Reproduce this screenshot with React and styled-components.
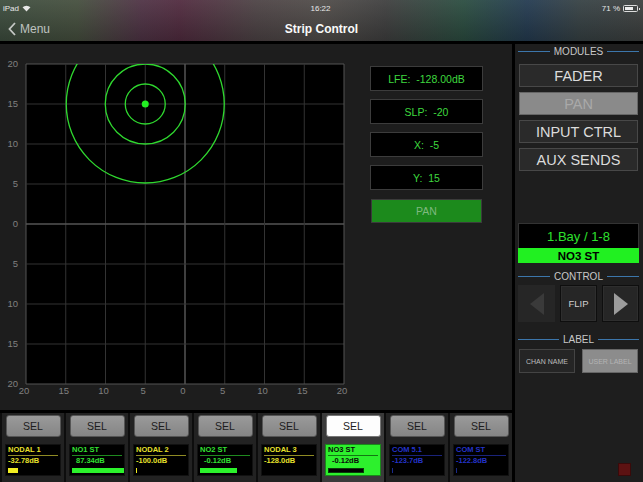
import React from 'react'
import styled, { createGlobalStyle } from 'styled-components'

const Global = createGlobalStyle`
  html, body { margin: 0; padding: 0; background: #000; }
  * { box-sizing: border-box; }
`

const Screen = styled.div`
  width: 643px;
  height: 482px;
  overflow: hidden;
  display: flex;
  flex-direction: column;
  background: #000;
  font-family: "Liberation Sans", Arial, sans-serif;
`

const TopBar = styled.div`
  height: 41px;
  flex: none;
  position: relative;
  background:
    linear-gradient(to bottom, rgba(255,255,255,0.05) 0%, rgba(0,0,0,0.22) 100%),
    linear-gradient(to right, #3e4e3f 0%, #46503f 12%, #503446 22%, #522c40 28%, #4e4446 40%, #514d4a 50%, #404040 60%, #2c4e41 72%, #253c52 82%, #374245 90%, #3e4140 100%);
  color: #fff;
`

const StatusRow = styled.div`
  height: 17px;
  display: flex;
  align-items: center;
  justify-content: space-between;
  padding: 0 5px 0 3px;
  font-size: 8px;
  color: #e8e8e8;
`

const StatusSide = styled.div`
  width: 80px;
  display: flex;
  align-items: center;
  gap: 3px;
  justify-content: ${p => (p.$right ? 'flex-end' : 'flex-start')};
`

const Battery = styled.div`
  width: 15px;
  height: 7px;
  border: 1px solid #ddd;
  border-radius: 1.5px;
  padding: 1px;
  position: relative;
  &::before {
    content: '';
    display: block;
    width: 70%;
    height: 100%;
    background: #eee;
  }
  &::after {
    content: '';
    position: absolute;
    right: -3px;
    top: 1.5px;
    width: 1.5px;
    height: 2.5px;
    background: #ddd;
  }
`

const NavRow = styled.div`
  height: 24px;
  display: flex;
  align-items: center;
  position: relative;
`

const BackLink = styled.div`
  display: flex;
  align-items: center;
  gap: 4px;
  padding-left: 8px;
  font-size: 12px;
  color: #bfc3c0;
`

const Title = styled.div`
  position: absolute;
  left: 0;
  right: 0;
  text-align: center;
  font-size: 12px;
  font-weight: bold;
  color: #fafafa;
  pointer-events: none;
`

const Body = styled.div`
  flex: 1;
  display: flex;
  margin-top: 3px;
  gap: 3px;
  min-height: 0;
`

const LeftCol = styled.div`
  width: 512px;
  flex: none;
  display: flex;
  flex-direction: column;
  gap: 3px;
`

const PanPanel = styled.div`
  height: 366px;
  background: #1d1d1d;
  display: flex;
  padding-top: 10px;
`

const ChartBox = styled.div`
  width: 370px;
  flex: none;
`

const InfoCol = styled.div`
  width: 113px;
  display: flex;
  flex-direction: column;
  gap: 8px;
  padding-top: 12px;
`

const Readout = styled.div`
  height: 25px;
  background: #000;
  border: 1px solid #3c3c3c;
  color: #3ed83e;
  font-size: 10.5px;
  display: flex;
  align-items: center;
  justify-content: center;
  white-space: pre;
`

const PanButton = styled.div`
  height: 24px;
  margin: 1px 1px 0;
  background: #1c8a1c;
  border: 1px solid #3b3b3b;
  color: #7fb97f;
  font-size: 10.5px;
  display: flex;
  align-items: center;
  justify-content: center;
`

const StripRow = styled.div`
  flex: 1;
  background: #0d0d0d;
  display: flex;
  gap: 2px;
  padding-left: 2px;
`

const Strip = styled.div`
  width: 62px;
  background: ${p => (p.$selected ? '#3a3a3a' : '#222')};
  display: flex;
  flex-direction: column;
  align-items: center;
  padding-top: 2px;
`

const SelButton = styled.div`
  width: 55px;
  height: 22px;
  border-radius: 3px;
  background: ${p => (p.$selected ? '#fdfdfd' : 'linear-gradient(#9a9a9a, #858585)')};
  border: 1px solid ${p => (p.$selected ? '#777' : '#555')};
  color: #1c1c1c;
  font-size: 10.5px;
  display: flex;
  align-items: center;
  justify-content: center;
`

const LabelBox = styled.div`
  width: 56px;
  height: 32px;
  margin-top: 7px;
  background: ${p => (p.$selected ? '#2df02d' : '#000')};
  border: 1px solid ${p => (p.$selected ? '#1a8a1a' : '#111')};
  padding: 1px 2px 0;
  display: flex;
  flex-direction: column;
  color: ${p => p.$color};
  font-size: 7.5px;
  font-weight: bold;
  line-height: 8px;
`

const ChanName = styled.div`
  border-bottom: 1px solid ${p => p.$line};
  padding-bottom: 1px;
  white-space: nowrap;
`

const ChanDb = styled.div`
  padding-left: ${p => (p.$indent ? '4px' : '0')};
  margin-top: 1px;
  white-space: nowrap;
`

const Meter = styled.div`
  margin-top: auto;
  margin-bottom: 2px;
  height: 5px;
  width: ${p => p.$w}px;
  background: ${p => p.$fill};
  border: ${p => (p.$outline ? '1px solid #0a3a0a' : 'none')};
`

const RightPanel = styled.div`
  flex: 1;
  background: #1e1e1e;
  padding: 0 4px 0 3px;
  display: flex;
  flex-direction: column;
  position: relative;
`

const SectionHead = styled.div`
  display: flex;
  align-items: center;
  gap: 4px;
  height: 15px;
  margin-top: ${p => p.$top || 0}px;
  color: #c8c8c8;
  font-size: 10px;
  &::before, &::after {
    content: '';
    flex: 1;
    height: 1.5px;
    background: #3c76ab;
  }
`

const ModuleButton = styled.div`
  height: 23px;
  margin: 5px 1px 0;
  background: ${p => (p.$active ? '#8a8a8a' : '#2a2a2a')};
  border: 1px solid ${p => (p.$active ? '#666' : '#484848')};
  color: ${p => (p.$active ? '#a9a9a9' : '#dcdcdc')};
  font-size: 14.5px;
  display: flex;
  align-items: center;
  justify-content: center;
`

const BayBox = styled.div`
  margin-top: 52px;
  height: 25px;
  background: #000;
  border: 1px solid #333;
  border-bottom: none;
  color: #2ee02e;
  font-size: 13px;
  display: flex;
  align-items: center;
  justify-content: center;
`

const BayName = styled.div`
  height: 15px;
  background: #21f021;
  color: #000;
  font-size: 11.5px;
  font-weight: bold;
  display: flex;
  align-items: center;
  justify-content: center;
`

const ControlRow = styled.div`
  margin-top: 1px;
  display: flex;
  justify-content: space-between;
`

const CtrlButton = styled.div`
  width: 37px;
  height: 37px;
  background: #262626;
  border: 1px solid ${p => (p.$dim ? '#262626' : '#0e0e0e')};
  box-shadow: ${p => (p.$dim ? 'none' : 'inset 0 0 0 1px #2e2e2e')};
  color: #cfcfcf;
  font-size: 9.5px;
  display: flex;
  align-items: center;
  justify-content: center;
`

const LabelRow = styled.div`
  margin-top: 2px;
  display: flex;
  justify-content: space-between;
  padding: 0 1px;
`

const LabelButton = styled.div`
  width: 56px;
  height: 24px;
  background: ${p => (p.$active ? '#8c8c8c' : '#252525')};
  border: 1px solid ${p => (p.$active ? '#666' : '#444')};
  color: ${p => (p.$active ? '#b4b4b4' : '#bdbdbd')};
  font-size: 7px;
  display: flex;
  align-items: center;
  justify-content: center;
  white-space: nowrap;
`

const RecDot = styled.div`
  position: absolute;
  right: 12px;
  bottom: 6px;
  width: 13px;
  height: 13px;
  background: #5c1212;
  border: 1px solid #3a0a0a;
`

const PLOT = { x0: 26, x1: 344, y0: 10, y1: 330 }
const LABELS = [20, 15, 10, 5, 0, 5, 10, 15, 20]

function PanChart() {
  const sx = (PLOT.x1 - PLOT.x0) / 8
  const sy = (PLOT.y1 - PLOT.y0) / 8
  const cx = PLOT.x0 + 3 * sx
  const cy = PLOT.y0 + sy
  return (
    <svg width="370" height="350" viewBox="0 0 370 350">
      <defs>
        <clipPath id="plot">
          <rect x={PLOT.x0} y={PLOT.y0} width={PLOT.x1 - PLOT.x0} height={PLOT.y1 - PLOT.y0} />
        </clipPath>
      </defs>
      <rect x={PLOT.x0} y={PLOT.y0} width={PLOT.x1 - PLOT.x0} height={PLOT.y1 - PLOT.y0} fill="#000" />
      {LABELS.map((_, i) => {
        const x = PLOT.x0 + i * sx
        const y = PLOT.y0 + i * sy
        const mid = i === 4
        const edge = i === 0 || i === 8
        const c = mid || edge ? '#555' : '#333'
        const w = mid ? 1.5 : 1
        return (
          <g key={i}>
            <line x1={x} y1={PLOT.y0} x2={x} y2={PLOT.y1} stroke={c} strokeWidth={w} />
            <line x1={PLOT.x0} y1={y} x2={PLOT.x1} y2={y} stroke={c} strokeWidth={w} />
          </g>
        )
      })}
      <g clipPath="url(#plot)" fill="none" stroke="#2fd82f" strokeWidth="1.3">
        <circle cx={cx} cy={cy} r="20" />
        <circle cx={cx} cy={cy} r="40" />
        <circle cx={cx} cy={cy} r="79" />
        <circle cx={cx} cy={cy} r="3.5" fill="#22f022" stroke="none" />
      </g>
      <g fill="#808080" fontSize="9.5" fontFamily="Liberation Sans, Arial, sans-serif">
        {LABELS.map((v, i) => (
          <text key={'y' + i} x="18" y={PLOT.y0 + i * sy + 3} textAnchor="end">{v}</text>
        ))}
        {LABELS.map((v, i) => (
          <text key={'x' + i} x={PLOT.x0 + i * sx - 2} y={PLOT.y1 + 10} textAnchor="middle">{v}</text>
        ))}
      </g>
    </svg>
  )
}

const COLORS = {
  yellow: { text: '#e6e12c', line: '#8f8b24', meter: '#f2ee22' },
  green: { text: '#33e033', line: '#1f8a1f', meter: '#2cf22c' },
  blue: { text: '#2433c8', line: '#1a237a', meter: '#1a2a8a' },
  sel: { text: '#0a0a0a', line: '#127812', meter: '#000' },
}

const channels = [
  { name: 'NODAL 1', db: '-32.78dB', color: 'yellow', meter: 10 },
  { name: 'NO1 ST', db: '87.34dB', color: 'green', meter: 52, indent: true },
  { name: 'NODAL 2', db: '-100.0dB', color: 'yellow', meter: 1 },
  { name: 'NO2 ST', db: '-0.12dB', color: 'green', meter: 37, indent: true },
  { name: 'NODAL 3', db: '-128.0dB', color: 'yellow', meter: 0 },
  { name: 'NO3 ST', db: '-0.12dB', color: 'sel', meter: 36, indent: true, selected: true },
  { name: 'COM 5.1', db: '-123.7dB', color: 'blue', meter: 1 },
  { name: 'COM ST', db: '-122.8dB', color: 'blue', meter: 1 },
]

function Triangle({ dir, color }) {
  const d = dir === 'left' ? 'M16 1 L16 23 L2 12 Z' : 'M2 1 L2 23 L16 12 Z'
  return (
    <svg width="18" height="24" viewBox="0 0 18 24">
      <path d={d} fill={color} />
    </svg>
  )
}

export default function App() {
  return (
    <Screen>
      <Global />
      <TopBar>
        <StatusRow>
          <StatusSide>
            iPad
            <svg width="9" height="7" viewBox="0 0 10 8">
              <path d="M0.5 2.6 A6.5 6.5 0 0 1 9.5 2.6 L5 7.5 Z" fill="#e8e8e8" />
            </svg>
          </StatusSide>
          <span>16:22</span>
          <StatusSide $right>
            71 %
            <Battery />
          </StatusSide>
        </StatusRow>
        <NavRow>
          <BackLink>
            <svg width="8" height="14" viewBox="0 0 8 14">
              <path d="M7 1 L1.5 7 L7 13" stroke="#c5c8c5" strokeWidth="1.8" fill="none" />
            </svg>
            Menu
          </BackLink>
          <Title>Strip Control</Title>
        </NavRow>
      </TopBar>
      <Body>
        <LeftCol>
          <PanPanel>
            <ChartBox>
              <PanChart />
            </ChartBox>
            <InfoCol>
              <Readout>{'LFE:  -128.00dB'}</Readout>
              <Readout>{'SLP:  -20'}</Readout>
              <Readout>{'X:  -5'}</Readout>
              <Readout>{'Y:  15'}</Readout>
              <PanButton>PAN</PanButton>
            </InfoCol>
          </PanPanel>
          <StripRow>
            {channels.map(ch => {
              const c = COLORS[ch.color]
              return (
                <Strip key={ch.name} $selected={ch.selected}>
                  <SelButton $selected={ch.selected}>SEL</SelButton>
                  <LabelBox $selected={ch.selected} $color={c.text}>
                    <ChanName $line={c.line}>{ch.name}</ChanName>
                    <ChanDb $indent={ch.indent}>{ch.db}</ChanDb>
                    <Meter $w={ch.meter} $fill={c.meter} $outline={ch.selected} />
                  </LabelBox>
                </Strip>
              )
            })}
          </StripRow>
        </LeftCol>
        <RightPanel>
          <SectionHead>MODULES</SectionHead>
          <ModuleButton>FADER</ModuleButton>
          <ModuleButton $active>PAN</ModuleButton>
          <ModuleButton>INPUT CTRL</ModuleButton>
          <ModuleButton>AUX SENDS</ModuleButton>
          <BayBox>1.Bay / 1-8</BayBox>
          <BayName>NO3 ST</BayName>
          <SectionHead $top={6}>CONTROL</SectionHead>
          <ControlRow>
            <CtrlButton $dim>
              <Triangle dir="left" color="#3a3a3a" />
            </CtrlButton>
            <CtrlButton>FLIP</CtrlButton>
            <CtrlButton>
              <Triangle dir="right" color="#9c9c9c" />
            </CtrlButton>
          </ControlRow>
          <SectionHead $top={10}>LABEL</SectionHead>
          <LabelRow>
            <LabelButton>CHAN NAME</LabelButton>
            <LabelButton $active>USER LABEL</LabelButton>
          </LabelRow>
          <RecDot />
        </RightPanel>
      </Body>
    </Screen>
  )
}
